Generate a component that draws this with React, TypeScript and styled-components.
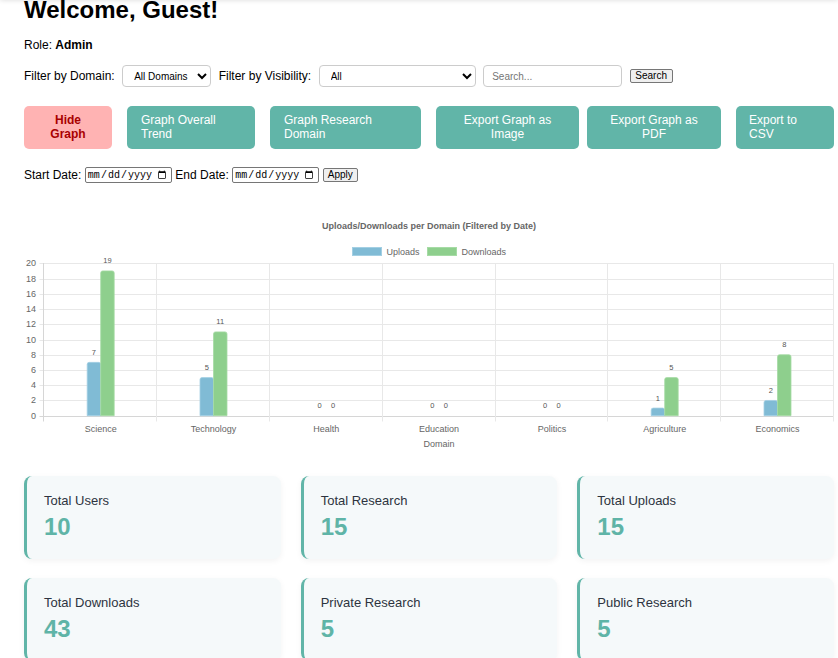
import React from "react";
import styled, { createGlobalStyle } from "styled-components";

const GlobalStyle = createGlobalStyle`
  html, body { margin: 0; padding: 0; background: #fff; }
  body {
    font-family: "Liberation Sans", Arial, Helvetica, sans-serif;
    font-size: 12px;
    color: #000;
    overflow: hidden;
  }
  * { box-sizing: border-box; }
`;

const TopShade = styled.div`
  position: fixed;
  top: -4px;
  left: 0;
  right: 0;
  height: 4px;
  box-shadow: 0 0 5px rgba(0, 0, 0, 0.16);
`;

const Page = styled.main`
  padding: 0 4px 0 24px;
`;

const Title = styled.h1`
  margin: -4px 0 0;
  font-size: 24px;
  line-height: 28px;
  font-weight: bold;
`;

const RoleLine = styled.p`
  margin: 14px 0 0;
  font-size: 12px;
  line-height: 14px;
`;

const FilterRow = styled.div`
  display: flex;
  align-items: center;
  gap: 7.5px;
  margin-top: 13px;
  height: 22px;
`;

const Label = styled.label`
  font-size: 12px;
  line-height: 14px;
  white-space: nowrap;
`;

const Select = styled.select<{ $w: number }>`
  width: ${(p) => p.$w}px;
  height: 22px;
  font-size: 10px;
  font-family: inherit;
  color: #000;
  background: #fff;
  border: 1px solid #ccc;
  border-radius: 4px;
  padding: 0 4px 0 7px;
`;

const SearchInput = styled.input`
  width: 139px;
  height: 22px;
  font-size: 10px;
  font-family: inherit;
  border: 1px solid #ccc;
  border-radius: 4px;
  padding: 0 8px;
  &::placeholder { color: #757575; }
`;

const PlainButton = styled.button<{ $w: number }>`
  width: ${(p) => p.$w}px;
  height: 14px;
  padding: 0;
  font-size: 10px;
  line-height: 12px;
  font-family: inherit;
  color: #000;
  background: #efefef;
  border: 1px solid #767676;
  border-radius: 2px;
`;

const ActionRow = styled.div`
  display: flex;
  margin-top: 19px;
`;

const ActionButton = styled.button<{
  $w: number;
  $ml: number;
  $pad: number;
  $align: "left" | "center";
  $danger?: boolean;
}>`
  width: ${(p) => p.$w}px;
  height: 43px;
  margin-left: ${(p) => p.$ml}px;
  padding: 0 ${(p) => p.$pad}px 1px;
  text-align: ${(p) => p.$align};
  border: none;
  border-radius: 5px;
  background: ${(p) => (p.$danger ? "#ffb3b3" : "#61b5a8")};
  color: ${(p) => (p.$danger ? "#a80000" : "#fff")};
  font-weight: ${(p) => (p.$danger ? "bold" : "normal")};
  font-family: inherit;
  font-size: 12px;
  line-height: 14px;
`;

const DateRow = styled.div`
  display: flex;
  align-items: center;
  gap: 3.5px;
  margin-top: 18px;
  height: 16px;
`;

const DateInput = styled.input`
  width: 87px;
  height: 16px;
  font-size: 10px;
  font-family: "Liberation Mono", "DejaVu Sans Mono", monospace;
  color: #000;
  border: 1px solid #767676;
  border-radius: 2px;
  padding: 0 2px 0 1px;
`;

const ChartBox = styled.figure`
  margin: 22px 0 0;
  width: 810px;
  height: 250px;
  svg { display: block; }
`;

const StatsGrid = styled.section`
  display: grid;
  grid-template-columns: repeat(3, 1fr);
  column-gap: 20px;
  row-gap: 19px;
  margin-top: 21px;
`;

const StatCard = styled.div`
  background: #f5f9fa;
  border-left: 3px solid #61b5a8;
  border-radius: 8px;
  padding: 17px 16px 18px 17px;
  box-shadow: 0 2px 6px rgba(0, 0, 0, 0.05);
`;

const StatLabel = styled.div`
  font-size: 13px;
  line-height: 15px;
  color: #2d3440;
`;

const StatValue = styled.div`
  margin-top: 5px;
  font-size: 24px;
  line-height: 28px;
  font-weight: bold;
  color: #5fb4a7;
`;

const domains = [
  { name: "Science", up: 7, down: 19 },
  { name: "Technology", up: 5, down: 11 },
  { name: "Health", up: 0, down: 0 },
  { name: "Education", up: 0, down: 0 },
  { name: "Politics", up: 0, down: 0 },
  { name: "Agriculture", up: 1, down: 5 },
  { name: "Economics", up: 2, down: 8 },
];

const X0 = 44.3;
const CW = 112.8;
const Y0 = 415.7;
const UNIT = 7.62;
const BW = 13.5;
const BLUE = "#80bbd5";
const BLUE_LINE = "#a3cfe3";
const GREEN = "#8ecf8d";
const GREEN_LINE = "#a6dba5";

const barPath = (x: number, top: number, w: number, h: number) => {
  const r = Math.min(2, h);
  const b = top + h;
  return `M${x} ${b} L${x} ${top + r} Q${x} ${top} ${x + r} ${top} L${x + w - r} ${top} Q${x + w} ${top} ${x + w} ${top + r} L${x + w} ${b} Z`;
};

const Chart: React.FC = () => {
  const ticks = Array.from({ length: 11 }, (_, i) => i * 2);
  const textStyle = { fontFamily: "'Liberation Sans', Arial, sans-serif" };
  return (
    <svg width={810} height={250} viewBox="24 205 810 250" style={textStyle}>
      <text x={429} y={226} textAnchor="middle" dominantBaseline="central" fontSize={9} fontWeight="bold" fill="#666">
        Uploads/Downloads per Domain (Filtered by Date)
      </text>
      <rect x={352.5} y={247.5} width={29} height={8} fill={BLUE} stroke={BLUE_LINE} />
      <text x={386.5} y={251.5} dominantBaseline="central" fontSize={9} fill="#666">Uploads</text>
      <rect x={427.5} y={247.5} width={29} height={8} fill={GREEN} stroke={GREEN_LINE} />
      <text x={461.5} y={251.5} dominantBaseline="central" fontSize={9} fill="#666">Downloads</text>

      {ticks.map((v) => {
        const y = Math.round(Y0 - v * UNIT) + 0.5;
        return (
          <g key={v}>
            <line x1={39.5} x2={834} y1={y} y2={y} stroke={v === 0 ? "#d6d6d6" : "#e8e8e8"} strokeWidth={1} />
            <text x={36} y={Y0 - v * UNIT} textAnchor="end" dominantBaseline="central" fontSize={9} fill="#666">
              {v}
            </text>
          </g>
        );
      })}
      {Array.from({ length: 8 }, (_, k) => {
        const x = Math.round(X0 + k * CW) - 0.5;
        return <line key={k} x1={x} x2={x} y1={263} y2={421.5} stroke={k === 0 ? "#d6d6d6" : "#e8e8e8"} strokeWidth={1} />;
      })}

      {domains.map((d, k) => {
        const cx = X0 + (k + 0.5) * CW;
        const hu = d.up * UNIT;
        const hd = d.down * UNIT;
        return (
          <g key={d.name}>
            {d.up > 0 && (
              <path d={barPath(cx - BW, Y0 - hu, BW, hu)} fill={BLUE} stroke={BLUE_LINE} strokeWidth={0.8} />
            )}
            {d.down > 0 && (
              <path d={barPath(cx, Y0 - hd, BW, hd)} fill={GREEN} stroke={GREEN_LINE} strokeWidth={0.8} />
            )}
            <text x={cx - BW / 2} y={Y0 - hu - 10} textAnchor="middle" dominantBaseline="central" fontSize={7.5} fill="#555">
              {d.up}
            </text>
            <text x={cx + BW / 2} y={Y0 - hd - 10} textAnchor="middle" dominantBaseline="central" fontSize={7.5} fill="#555">
              {d.down}
            </text>
            <text x={cx} y={429} textAnchor="middle" dominantBaseline="central" fontSize={9} fill="#666">
              {d.name}
            </text>
          </g>
        );
      })}
      <text x={439} y={444} textAnchor="middle" dominantBaseline="central" fontSize={9} fill="#666">
        Domain
      </text>
    </svg>
  );
};

const actions = [
  { label: "Hide Graph", w: 88, ml: 0, pad: 14, align: "center" as const, danger: true },
  { label: "Graph Overall Trend", w: 128, ml: 15, pad: 14, align: "left" as const },
  { label: "Graph Research Domain", w: 151, ml: 15, pad: 14, align: "left" as const },
  { label: "Export Graph as Image", w: 143, ml: 15, pad: 12, align: "center" as const },
  { label: "Export Graph as PDF", w: 134, ml: 8, pad: 12, align: "center" as const },
  { label: "Export to CSV", w: 98, ml: 15, pad: 13, align: "left" as const },
];

const stats = [
  { label: "Total Users", value: 10 },
  { label: "Total Research", value: 15 },
  { label: "Total Uploads", value: 15 },
  { label: "Total Downloads", value: 43 },
  { label: "Private Research", value: 5 },
  { label: "Public Research", value: 5 },
];

export default function App() {
  return (
    <>
      <GlobalStyle />
      <TopShade />
      <Page>
        <Title>Welcome, Guest!</Title>
        <RoleLine>
          Role: <b>Admin</b>
        </RoleLine>

        <FilterRow>
          <Label htmlFor="domain">Filter by Domain:</Label>
          <Select id="domain" $w={89} defaultValue="all">
            <option value="all">All Domains</option>
          </Select>
          <Label htmlFor="visibility">Filter by Visibility:</Label>
          <Select id="visibility" $w={157} defaultValue="all">
            <option value="all">All</option>
          </Select>
          <SearchInput placeholder="Search..." />
          <PlainButton $w={43}>Search</PlainButton>
        </FilterRow>

        <ActionRow>
          {actions.map((a) => (
            <ActionButton key={a.label} $w={a.w} $ml={a.ml} $pad={a.pad} $align={a.align} $danger={a.danger}>
              {a.label}
            </ActionButton>
          ))}
        </ActionRow>

        <DateRow>
          <Label>Start Date:</Label>
          <DateInput type="date" />
          <Label>End Date:</Label>
          <DateInput type="date" />
          <PlainButton $w={35}>Apply</PlainButton>
        </DateRow>

        <ChartBox>
          <Chart />
        </ChartBox>

        <StatsGrid>
          {stats.map((s) => (
            <StatCard key={s.label}>
              <StatLabel>{s.label}</StatLabel>
              <StatValue>{s.value}</StatValue>
            </StatCard>
          ))}
        </StatsGrid>
      </Page>
    </>
  );
}
